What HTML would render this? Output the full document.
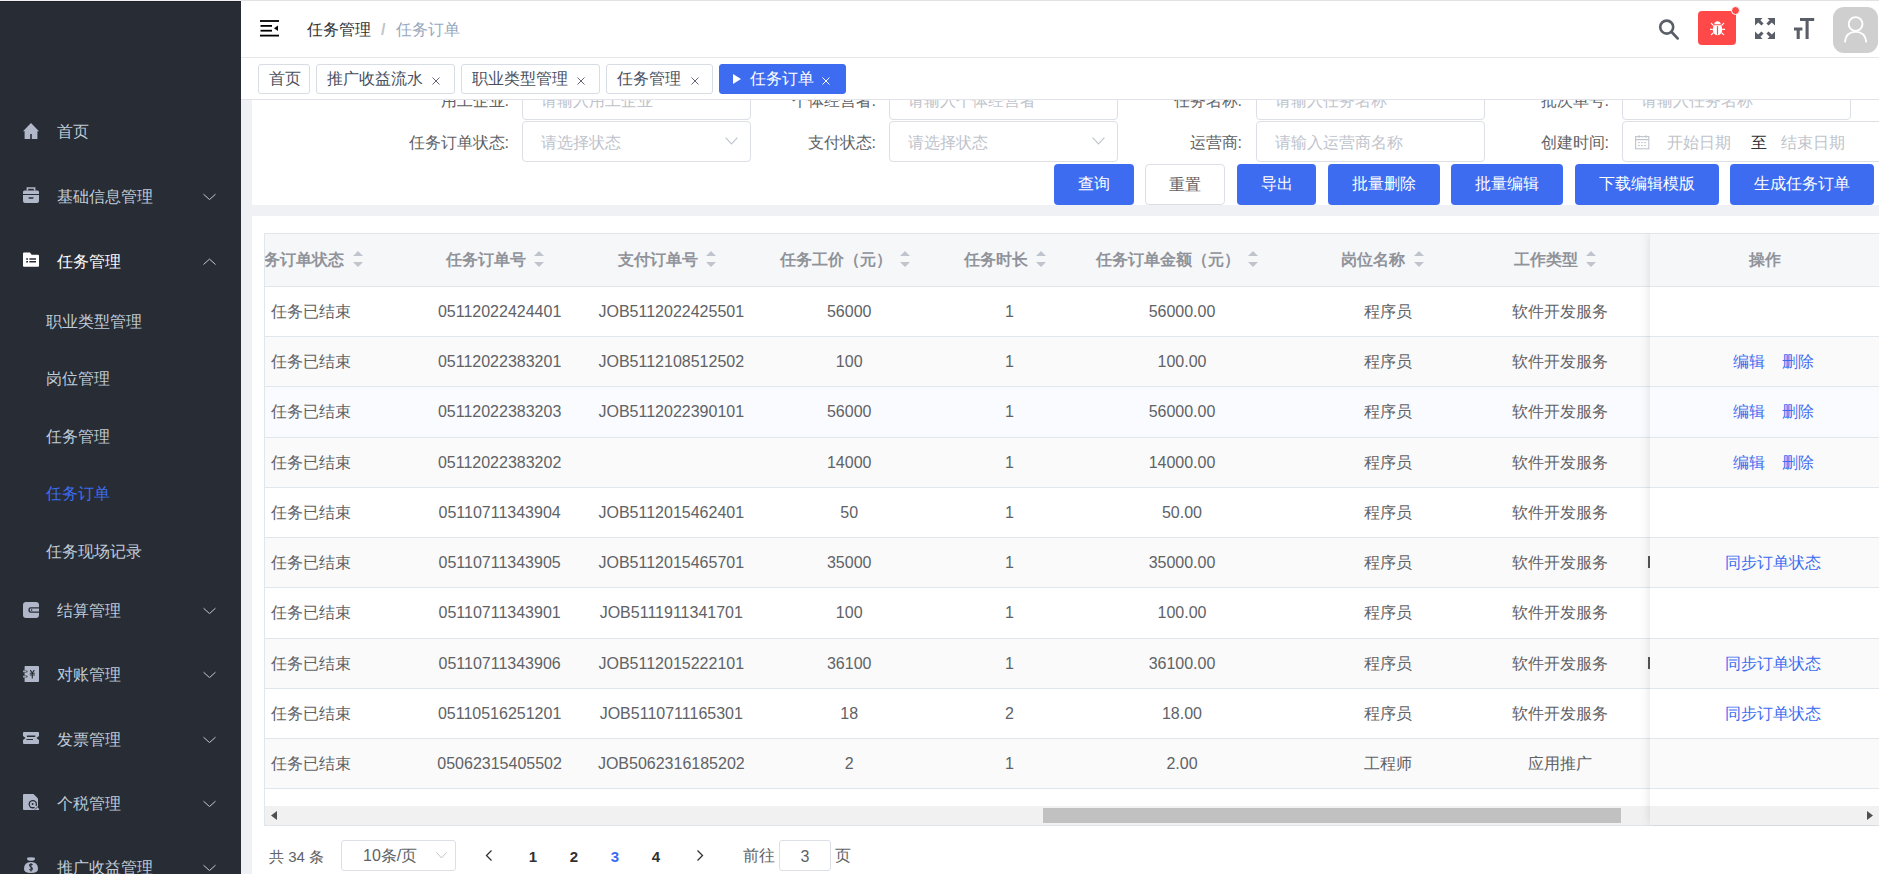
<!DOCTYPE html>
<html><head><meta charset="utf-8">
<style>
*{box-sizing:border-box;margin:0;padding:0}
html,body{width:1879px;height:874px;overflow:hidden;background:#fff;font-family:"Liberation Sans",sans-serif;font-size:16px;color:#606266}
.a{position:absolute}
#topline{left:241px;top:0;width:1638px;height:1px;background:#e2e2e2}
#side{left:0;top:0;width:241px;height:874px;background:#282c34;overflow:hidden}
#sl0{left:0;top:0;width:241px;height:1px;background:#f2f2f4;z-index:9}
#sl1{left:0;top:1px;width:241px;height:1px;background:#1f2228;z-index:9}
.mi{position:absolute;left:0;width:241px;height:30px;line-height:30px;color:#bfcbd9;font-size:16px;white-space:nowrap}
.mi .ic{position:absolute;left:23px;top:7px;width:16px;height:16px}
.mi .tx{position:absolute;left:57px;top:1px}
.mi .ar{position:absolute;left:203px;top:12px;width:13px;height:7px}
.si{position:absolute;left:46px;height:30px;line-height:32px;color:#bfcbd9;font-size:16px;white-space:nowrap}
#nav{left:241px;top:1px;width:1638px;height:57px;background:#fff;border-bottom:1px solid #e6e6e6;z-index:5}
#tags{left:241px;top:58px;width:1638px;height:42px;background:#fff;border-bottom:1px solid #e1e3e8;z-index:5}
.tag{position:absolute;top:6px;height:30px;border:1px solid #d8dce5;border-radius:3px;background:#fff;color:#495060;font-size:16px;line-height:28px;white-space:nowrap;padding-left:10px}
.tag .x{position:absolute;font-size:13px;top:0}
#main{left:241px;top:58px;width:1638px;height:816px;background:#eff1f5}
.card{position:absolute;left:11px;background:#fff}
.lbl{position:absolute;height:41px;line-height:43px;color:#606266;font-size:16px;text-align:right;white-space:nowrap}
.inp{position:absolute;height:41px;border:1px solid #dcdfe6;border-radius:4px;background:#fff;color:#c0c4cc;font-size:16px;line-height:41px;padding-left:18px;white-space:nowrap;overflow:hidden}
.btn{position:absolute;top:164px;height:41px;border-radius:4px;background:#3d6cf0;color:#fff;font-size:16px;line-height:40px;text-align:center;white-space:nowrap;font-weight:500}
.btn.pl{background:#fff;border:1px solid #dcdfe6;color:#606266;line-height:39px}
.th{position:absolute;top:0;height:53px;line-height:53px;font-size:16px;font-weight:bold;color:#909399;white-space:nowrap}
.tr{position:absolute;left:0;width:1615px;border-bottom:1px solid #dfe6ec}
.td{position:absolute;top:0;width:300px;height:49px;line-height:49px;text-align:center;white-space:nowrap;color:#606266;font-size:16px}
.td.lk{width:auto;text-align:left;color:#3d6cf0}
.pg{font-size:16px;color:#606266;white-space:nowrap}
.pn{top:841px;width:40px;height:31px;line-height:31px;text-align:center;font-size:15px;font-weight:bold;color:#303133}
</style></head><body>
<div id="topline" class="a"></div><div id="sl0" class="a"></div><div id="sl1" class="a"></div>
<div id="side" class="a"><div class="mi" style="top:116px"><svg class="ic" viewBox="0 0 16 16"><path d="M8 0L0 8.2H1.6V16H7.2V11H8.8V16H14.4V8.2H16Z" fill="#b1b8c9"/></svg><span class="tx">首页</span></div><div class="mi" style="top:181px"><svg class="ic" style="top:6px" viewBox="0 0 16 16"><path d="M3.6 0.2H12.4V3.4H10.8V1.8H5.2V3.4H3.6Z" fill="#b1b8c9"/><path d="M1.5 3.4H14.5Q16 3.4 16 4.9V7H0V4.9Q0 3.4 1.5 3.4Z" fill="#b1b8c9"/><path d="M0 8H16V14Q16 16 14 16H2Q0 16 0 14ZM5.5 10.2V11Q5.5 11.8 6.3 11.8H9.7Q10.5 11.8 10.5 11V10.2Z" fill="#b1b8c9" fill-rule="evenodd"/></svg><span class="tx">基础信息管理</span><svg class="ar" viewBox="0 0 13 7"><path d="M0.5 1.2L6.5 6.6L12.5 1.2" fill="none" stroke="#bfcbd9" stroke-width="1"/></svg></div><div class="mi" style="top:246px;color:#fff"><svg class="ic" style="top:6px" viewBox="0 0 16 16"><path d="M1 0.5H7L8.6 2.7H15Q16 2.7 16 3.7V14Q16 14.8 15 14.8H1Q0 14.8 0 14V1.5Q0 0.5 1 0.5ZM3.2 6.2V7.8H5V6.2ZM6.4 6.2V7.8H13V6.2ZM3.2 9V10.6H5V9ZM6.4 9V10.6H13V9Z" fill="#fff" fill-rule="evenodd"/></svg><span class="tx">任务管理</span><svg class="ar" viewBox="0 0 13 7"><path d="M0.5 6.5L6.5 1.1L12.5 6.5" fill="none" stroke="#bfcbd9" stroke-width="1"/></svg></div><div class="si" style="top:306px">职业类型管理</div><div class="si" style="top:363px">岗位管理</div><div class="si" style="top:421px">任务管理</div><div class="si" style="top:478px;color:#3d6cf0">任务订单</div><div class="si" style="top:536px">任务现场记录</div><div class="mi" style="top:595px"><svg class="ic" viewBox="0 0 16 16"><path d="M3 0H13Q16 0 16 3V5.2H7.6Q5.4 5.2 5.4 8Q5.4 10.8 7.6 10.8H16V13Q16 16 13 16H3Q0 16 0 13V3Q0 0 3 0ZM16 6.6V9.4H7.6Q6.8 9.4 6.8 8Q6.8 6.6 7.6 6.6ZM8 7.3V8.7H9.2V7.3Z" fill="#b1b8c9" fill-rule="evenodd"/></svg><span class="tx">结算管理</span><svg class="ar" viewBox="0 0 13 7"><path d="M0.5 1.2L6.5 6.6L12.5 1.2" fill="none" stroke="#bfcbd9" stroke-width="1"/></svg></div><div class="mi" style="top:659px"><svg class="ic" viewBox="0 0 16 16"><path d="M2.2 0H15Q16 0 16 1V15Q16 16 15 16H2.2Q1.6 16 1.6 15.4V11.6H3Q4.6 11.6 4.6 10.6Q4.6 9.6 3 9.6H1.6V6.4H3Q4.6 6.4 4.6 5.4Q4.6 4.4 3 4.4H1.6V0.6Q1.6 0 2.2 0Z" fill="#b1b8c9"/><path d="M0 4.6H2.6Q3.6 4.6 3.6 5.4Q3.6 6.2 2.6 6.2H0ZM0 9.8H2.6Q3.6 9.8 3.6 10.6Q3.6 11.4 2.6 11.4H0Z" fill="#b1b8c9" opacity=".85"/><path d="M7.2 4.2L9.3 6.8L11.4 4.2M6.8 7.2H11.8M6.8 9H11.8M9.3 6.8V12.4" fill="none" stroke="#282c34" stroke-width="1.1"/></svg><span class="tx">对账管理</span><svg class="ar" viewBox="0 0 13 7"><path d="M0.5 1.2L6.5 6.6L12.5 1.2" fill="none" stroke="#bfcbd9" stroke-width="1"/></svg></div><div class="mi" style="top:724px"><svg class="ic" viewBox="0 0 16 16"><path d="M1 1H15Q16 1 16 2V5L13.4 7L16 9V12Q16 13 15 13H1Q0 13 0 12V9L2.6 7L0 5V2Q0 1 1 1ZM3.9 4.6V5.9H12.3V4.6ZM3.5 8V9.1H10V8Z" fill="#b1b8c9" fill-rule="evenodd"/></svg><span class="tx">发票管理</span><svg class="ar" viewBox="0 0 13 7"><path d="M0.5 1.2L6.5 6.6L12.5 1.2" fill="none" stroke="#bfcbd9" stroke-width="1"/></svg></div><div class="mi" style="top:788px"><svg class="ic" style="top:6px" viewBox="0 0 16 16"><path d="M1 0H10.5L15 4.5V16H1Q0 16 0 15V1Q0 0 1 0Z" fill="#b1b8c9"/><circle cx="9.8" cy="10.2" r="4.2" fill="#282c34"/><circle cx="9.8" cy="10.2" r="2.9" fill="#b1b8c9"/><circle cx="9.6" cy="10" r="1" fill="#282c34"/><path d="M12.4 12.8L15.2 15.6" stroke="#b1b8c9" stroke-width="2.2" stroke-linecap="round"/><path d="M12 15.5L15.5 12" stroke="#282c34" stroke-width="0.8"/></svg><span class="tx">个税管理</span><svg class="ar" viewBox="0 0 13 7"><path d="M0.5 1.2L6.5 6.6L12.5 1.2" fill="none" stroke="#bfcbd9" stroke-width="1"/></svg></div><div class="mi" style="top:852px"><svg class="ic" style="top:5px" viewBox="0 0 16 16"><path d="M4 1.5Q4 0 6 0.6Q8 -0.2 10 0.6Q12 0 12 1.5Q12 3.8 8 3.8Q4 3.8 4 1.5Z" fill="#b1b8c9"/><path d="M8 5Q15 5 15 12Q15 16 8 16Q1 16 1 12Q1 5 8 5Z" fill="#b1b8c9"/><path d="M9.6 7.8Q8 6.4 6.8 7.6Q6 8.8 8 10Q10 11.2 9.2 12.6Q8 13.8 6.4 12.4M8 6.2V14.4" fill="none" stroke="#282c34" stroke-width="1.1"/></svg><span class="tx">推广收益管理</span><svg class="ar" viewBox="0 0 13 7"><path d="M0.5 1.2L6.5 6.6L12.5 1.2" fill="none" stroke="#bfcbd9" stroke-width="1"/></svg></div></div>
<div id="main" class="a"></div>
<div class="a" style="left:252px;top:58px;width:1627px;height:147px;background:#fff"></div>
<div class="lbl" style="left:300px;top:79px;width:209px">用工企业:</div>
<div class="inp" style="left:522px;top:79px;width:229px">请输入用工企业</div>
<div class="lbl" style="left:700px;top:79px;width:176px">个体经营者:</div>
<div class="inp" style="left:889px;top:79px;width:229px">请输入个体经营者</div>
<div class="lbl" style="left:1100px;top:79px;width:142px">任务名称:</div>
<div class="inp" style="left:1256px;top:79px;width:229px">请输入任务名称</div>
<div class="lbl" style="left:1450px;top:79px;width:159px">批次单号:</div>
<div class="inp" style="left:1622px;top:79px;width:229px">请输入任务名称</div>
<div class="lbl" style="left:300px;top:121px;width:209px">任务订单状态:</div>
<div class="inp" style="left:522px;top:121px;width:229px">请选择状态<svg class="a" style="left:202px;top:15px" width="13" height="8" viewBox="0 0 13 8"><path d="M0.6 0.6L6.5 6.8L12.4 0.6" fill="none" stroke="#c0c4cc" stroke-width="1.2"/></svg></div>
<div class="lbl" style="left:700px;top:121px;width:176px">支付状态:</div>
<div class="inp" style="left:889px;top:121px;width:229px">请选择状态<svg class="a" style="left:202px;top:15px" width="13" height="8" viewBox="0 0 13 8"><path d="M0.6 0.6L6.5 6.8L12.4 0.6" fill="none" stroke="#c0c4cc" stroke-width="1.2"/></svg></div>
<div class="lbl" style="left:1100px;top:121px;width:142px">运营商:</div>
<div class="inp" style="left:1256px;top:121px;width:229px">请输入运营商名称</div>
<div class="lbl" style="left:1450px;top:121px;width:159px">创建时间:</div>
<div class="inp" style="left:1622px;top:121px;width:400px;padding-left:0">
<svg class="a" style="left:12px;top:13px" width="15" height="15" viewBox="0 0 15 15"><rect x="0.6" y="1.6" width="13.2" height="12.2" fill="none" stroke="#c0c4cc" stroke-width="1.1"/><path d="M0.6 4.6H13.8M4 0.2V2.8M11 0.2V2.8" stroke="#c0c4cc" stroke-width="1.1"/><path d="M3 7.6H11M3 10.6H11" stroke="#c0c4cc" stroke-width="0.9" stroke-dasharray="2 1"/></svg>
<span class="a" style="left:44px;top:0">开始日期</span><span class="a" style="left:128px;top:0;color:#303133">至</span><span class="a" style="left:158px;top:0">结束日期</span></div>
<div class="btn" style="left:1054px;width:80px">查询</div>
<div class="btn pl" style="left:1145px;width:80px">重置</div>
<div class="btn" style="left:1237px;width:79px">导出</div>
<div class="btn" style="left:1328px;width:112px">批量删除</div>
<div class="btn" style="left:1451px;width:112px">批量编辑</div>
<div class="btn" style="left:1575px;width:144px">下载编辑模版</div>
<div class="btn" style="left:1730px;width:144px">生成任务订单</div>
<div class="a" style="left:252px;top:216px;width:1627px;height:658px;background:#fff"></div>
<div class="a" style="left:264px;top:233px;width:1615px;height:593px;overflow:hidden">
<div class="a" style="left:0;top:0;width:1615px;height:54px;background:#f6f7f9;border-top:1px solid #dfe6ec;border-bottom:1px solid #dfe6ec"></div>
<div class="th" style="left:-16px">任务订单状态</div><svg class="a" style="left:89px;top:18px" width="10" height="16" viewBox="0 0 10 16"><path d="M0 5L5 0L10 5Z M0 11L5 16L10 11Z" fill="#c0c4cc"/></svg>
<div class="th" style="left:182px">任务订单号</div><svg class="a" style="left:270px;top:18px" width="10" height="16" viewBox="0 0 10 16"><path d="M0 5L5 0L10 5Z M0 11L5 16L10 11Z" fill="#c0c4cc"/></svg>
<div class="th" style="left:354px">支付订单号</div><svg class="a" style="left:442px;top:18px" width="10" height="16" viewBox="0 0 10 16"><path d="M0 5L5 0L10 5Z M0 11L5 16L10 11Z" fill="#c0c4cc"/></svg>
<div class="th" style="left:516px">任务工价（元）</div><svg class="a" style="left:636px;top:18px" width="10" height="16" viewBox="0 0 10 16"><path d="M0 5L5 0L10 5Z M0 11L5 16L10 11Z" fill="#c0c4cc"/></svg>
<div class="th" style="left:700px">任务时长</div><svg class="a" style="left:772px;top:18px" width="10" height="16" viewBox="0 0 10 16"><path d="M0 5L5 0L10 5Z M0 11L5 16L10 11Z" fill="#c0c4cc"/></svg>
<div class="th" style="left:832px">任务订单金额（元）</div><svg class="a" style="left:984px;top:18px" width="10" height="16" viewBox="0 0 10 16"><path d="M0 5L5 0L10 5Z M0 11L5 16L10 11Z" fill="#c0c4cc"/></svg>
<div class="th" style="left:1077px">岗位名称</div><svg class="a" style="left:1150px;top:18px" width="10" height="16" viewBox="0 0 10 16"><path d="M0 5L5 0L10 5Z M0 11L5 16L10 11Z" fill="#c0c4cc"/></svg>
<div class="th" style="left:1250px">工作类型</div><svg class="a" style="left:1322px;top:18px" width="10" height="16" viewBox="0 0 10 16"><path d="M0 5L5 0L10 5Z M0 11L5 16L10 11Z" fill="#c0c4cc"/></svg>
<div class="tr" style="top:54px;height:50px;background:#fff"><div class="td" style="left:-103px">任务已结束</div><div class="td" style="left:85.60000000000002px">05112022424401</div><div class="td" style="left:257.29999999999995px">JOB5112022425501</div><div class="td" style="left:435.20000000000005px">56000</div><div class="td" style="left:595.4px">1</div><div class="td" style="left:768px">56000.00</div><div class="td" style="left:973.7px">程序员</div><div class="td" style="left:1146px">软件开发服务</div></div>
<div class="tr" style="top:104px;height:50px;background:#fafafa"><div class="td" style="left:-103px">任务已结束</div><div class="td" style="left:85.60000000000002px">05112022383201</div><div class="td" style="left:257.29999999999995px">JOB5112108512502</div><div class="td" style="left:435.20000000000005px">100</div><div class="td" style="left:595.4px">1</div><div class="td" style="left:768px">100.00</div><div class="td" style="left:973.7px">程序员</div><div class="td" style="left:1146px">软件开发服务</div></div>
<div class="tr" style="top:154px;height:51px;background:#fafbfe"><div class="td" style="left:-103px">任务已结束</div><div class="td" style="left:85.60000000000002px">05112022383203</div><div class="td" style="left:257.29999999999995px">JOB5112022390101</div><div class="td" style="left:435.20000000000005px">56000</div><div class="td" style="left:595.4px">1</div><div class="td" style="left:768px">56000.00</div><div class="td" style="left:973.7px">程序员</div><div class="td" style="left:1146px">软件开发服务</div></div>
<div class="tr" style="top:205px;height:50px;background:#fafafa"><div class="td" style="left:-103px">任务已结束</div><div class="td" style="left:85.60000000000002px">05112022383202</div><div class="td" style="left:435.20000000000005px">14000</div><div class="td" style="left:595.4px">1</div><div class="td" style="left:768px">14000.00</div><div class="td" style="left:973.7px">程序员</div><div class="td" style="left:1146px">软件开发服务</div></div>
<div class="tr" style="top:255px;height:50px;background:#fff"><div class="td" style="left:-103px">任务已结束</div><div class="td" style="left:85.60000000000002px">05110711343904</div><div class="td" style="left:257.29999999999995px">JOB5112015462401</div><div class="td" style="left:435.20000000000005px">50</div><div class="td" style="left:595.4px">1</div><div class="td" style="left:768px">50.00</div><div class="td" style="left:973.7px">程序员</div><div class="td" style="left:1146px">软件开发服务</div></div>
<div class="tr" style="top:305px;height:50px;background:#fafafa"><div class="td" style="left:-103px">任务已结束</div><div class="td" style="left:85.60000000000002px">05110711343905</div><div class="td" style="left:257.29999999999995px">JOB5112015465701</div><div class="td" style="left:435.20000000000005px">35000</div><div class="td" style="left:595.4px">1</div><div class="td" style="left:768px">35000.00</div><div class="td" style="left:973.7px">程序员</div><div class="td" style="left:1146px">软件开发服务</div></div>
<div class="tr" style="top:355px;height:51px;background:#fff"><div class="td" style="left:-103px">任务已结束</div><div class="td" style="left:85.60000000000002px">05110711343901</div><div class="td" style="left:257.29999999999995px">JOB5111911341701</div><div class="td" style="left:435.20000000000005px">100</div><div class="td" style="left:595.4px">1</div><div class="td" style="left:768px">100.00</div><div class="td" style="left:973.7px">程序员</div><div class="td" style="left:1146px">软件开发服务</div></div>
<div class="tr" style="top:406px;height:50px;background:#fafafa"><div class="td" style="left:-103px">任务已结束</div><div class="td" style="left:85.60000000000002px">05110711343906</div><div class="td" style="left:257.29999999999995px">JOB5112015222101</div><div class="td" style="left:435.20000000000005px">36100</div><div class="td" style="left:595.4px">1</div><div class="td" style="left:768px">36100.00</div><div class="td" style="left:973.7px">程序员</div><div class="td" style="left:1146px">软件开发服务</div></div>
<div class="tr" style="top:456px;height:50px;background:#fff"><div class="td" style="left:-103px">任务已结束</div><div class="td" style="left:85.60000000000002px">05110516251201</div><div class="td" style="left:257.29999999999995px">JOB5110711165301</div><div class="td" style="left:435.20000000000005px">18</div><div class="td" style="left:595.4px">2</div><div class="td" style="left:768px">18.00</div><div class="td" style="left:973.7px">程序员</div><div class="td" style="left:1146px">软件开发服务</div></div>
<div class="tr" style="top:506px;height:50px;background:#fafafa"><div class="td" style="left:-103px">任务已结束</div><div class="td" style="left:85.60000000000002px">05062315405502</div><div class="td" style="left:257.29999999999995px">JOB5062316185202</div><div class="td" style="left:435.20000000000005px">2</div><div class="td" style="left:595.4px">1</div><div class="td" style="left:768px">2.00</div><div class="td" style="left:973.7px">工程师</div><div class="td" style="left:1146px">应用推广</div></div>
<div class="a" style="left:0;top:573px;width:1615px;height:19px;background:#f1f1f1"></div>
<div class="a" style="left:0;top:592px;width:1615px;height:1px;background:#dfe6ec"></div>
<div class="a" style="left:779px;top:575px;width:578px;height:15px;background:#c1c1c1"></div>
<svg class="a" style="left:7px;top:578px" width="6" height="9" viewBox="0 0 6 9"><path d="M6 0V9L0 4.5Z" fill="#505050"/></svg>
<div class="a" style="left:1386px;top:0;width:229px;height:592px;box-shadow:0 0 10px rgba(0,0,0,.12);background:#fff">
<div class="a" style="left:0;top:0;width:300px;height:54px;background:#f6f7f9;border-top:1px solid #dfe6ec;border-bottom:1px solid #dfe6ec"></div>
<div class="th" style="left:98.5px">操作</div>
<div class="tr" style="top:54px;height:50px;background:#fff"></div>
<div class="tr" style="top:104px;height:50px;background:#fafafa"><div class="td lk" style="left:82.70000000000005px">编辑</div><div class="td lk" style="left:131.70000000000005px">删除</div></div>
<div class="tr" style="top:154px;height:51px;background:#fafbfe"><div class="td lk" style="left:82.70000000000005px">编辑</div><div class="td lk" style="left:131.70000000000005px">删除</div></div>
<div class="tr" style="top:205px;height:50px;background:#fafafa"><div class="td lk" style="left:82.70000000000005px">编辑</div><div class="td lk" style="left:131.70000000000005px">删除</div></div>
<div class="tr" style="top:255px;height:50px;background:#fff"></div>
<div class="tr" style="top:305px;height:50px;background:#fafafa"><div class="td lk" style="left:75px">同步订单状态</div></div>
<div class="tr" style="top:355px;height:51px;background:#fff"></div>
<div class="tr" style="top:406px;height:50px;background:#fafafa"><div class="td lk" style="left:75px">同步订单状态</div></div>
<div class="tr" style="top:456px;height:50px;background:#fff"><div class="td lk" style="left:75px">同步订单状态</div></div>
<div class="tr" style="top:506px;height:50px;background:#fafafa"></div>
<div class="a" style="left:0;top:573px;width:300px;height:19px;background:#f1f1f1"></div>
</div>
<div class="a" style="left:1384px;top:323px;width:2px;height:12px;background:#505050"></div>
<div class="a" style="left:1384px;top:424px;width:2px;height:12px;background:#505050"></div>
</div>

<div id="nav" class="a">
<svg class="a" style="left:19px;top:19px" width="20" height="18" viewBox="0 0 20 18"><path d="M0 1H19" stroke="#000" stroke-width="1.8"/><path d="M0.5 5.9H12" stroke="#000" stroke-width="1.8"/><path d="M0.5 10.7H12" stroke="#000" stroke-width="1.8"/><path d="M0 15.6H19" stroke="#000" stroke-width="1.8"/><path d="M18 5.5V11.1L14 8.3Z" fill="#000"/></svg>
<div class="a" style="left:66px;top:14px;height:30px;line-height:30px;font-size:16px;color:#303133;white-space:nowrap">任务管理</div>
<div class="a" style="left:140px;top:14px;height:30px;line-height:30px;font-size:16px;color:#c0c4cc;white-space:nowrap;font-weight:bold">/</div>
<div class="a" style="left:155px;top:14px;height:30px;line-height:30px;font-size:16px;color:#97a8be;white-space:nowrap">任务订单</div>
<svg class="a" style="left:1416px;top:17px" width="22" height="24" viewBox="0 0 22 24"><circle cx="9.7" cy="9.1" r="6.5" fill="none" stroke="#5a5e66" stroke-width="2.6"/><path d="M14.6 14L20.6 20.4" stroke="#5a5e66" stroke-width="2.7" stroke-linecap="round"/></svg>
<div class="a" style="left:1457px;top:10px;width:38px;height:34px;background:#ff4949;border-radius:4px"></div>
<svg class="a" style="left:1469px;top:20px" width="15" height="15" viewBox="0 0 15 15"><path d="M4.2 3.2Q4.6 0.2 7.5 0.2Q10.4 0.2 10.8 3.2Z" fill="#fff"/><path d="M3.8 4.2H11.2Q12.2 6 12.2 9Q12.2 13.6 7.5 14.2Q2.8 13.6 2.8 9Q2.8 6 3.8 4.2Z" fill="#fff"/><path d="M7.5 5.2V13.6" stroke="#ff4949" stroke-width="1.2"/><path d="M1 2L3.6 4.6M14 2L11.4 4.6M0 8.4H2.8M15 8.4H12.2M1 14L3.6 11.6M14 14L11.4 11.6" stroke="#fff" stroke-width="1.1"/></svg>
<div class="a" style="left:1490.1px;top:5.2px;width:9px;height:9px;background:#ff4949;border:1px solid #fff;border-radius:50%"></div>
<svg class="a" style="left:1514px;top:17px" width="20" height="21" viewBox="0 0 20 21"><path d="M0 0H7.6L5.4 2.2L8.6 5.4L6.4 7.6L3.2 4.4L0 7.6Z M20 0H12.4L14.6 2.2L11.4 5.4L13.6 7.6L16.8 4.4L20 7.6Z M0 21H7.6L5.4 18.8L8.6 15.6L6.4 13.4L3.2 16.6L0 13.4Z M20 21H12.4L14.6 18.8L11.4 15.6L13.6 13.4L16.8 16.6L20 13.4Z" fill="#5a5e66"/></svg>
<svg class="a" style="left:1553px;top:17px" width="21" height="22" viewBox="0 0 21 22"><path d="M6 1.5H20.2M13.1 1.5V21" stroke="#5a5e66" stroke-width="3.1"/><path d="M0 11H8.4M4.2 11V21" stroke="#5a5e66" stroke-width="3.1"/></svg>
<div class="a" style="left:1592px;top:6px;width:45px;height:46px;background:#cfcfcf;border-radius:11px"></div>
<svg class="a" style="left:1592px;top:6px" width="46" height="46" viewBox="0 0 46 46"><circle cx="22.6" cy="17" r="6.9" fill="none" stroke="#fff" stroke-width="1.9"/><path d="M12 34.6Q12.8 25.2 22.6 24.6Q32.3 25.2 33.2 34.6" fill="none" stroke="#fff" stroke-width="1.9" stroke-linecap="round"/></svg>
</div>
<div id="tags" class="a">
<div class="tag" style="left:17px;width:52px">首页</div>
<div class="tag" style="left:75px;width:139px">推广收益流水<svg class="a" style="left:115.3px;top:11.5px" width="8" height="8" viewBox="0 0 8 8"><path d="M0.5 0.5L7.5 7.5M7.5 0.5L0.5 7.5" stroke="#5a6070" stroke-width="0.95"/></svg></div>
<div class="tag" style="left:220px;width:139px">职业类型管理<svg class="a" style="left:115px;top:11.5px" width="8" height="8" viewBox="0 0 8 8"><path d="M0.5 0.5L7.5 7.5M7.5 0.5L0.5 7.5" stroke="#5a6070" stroke-width="0.95"/></svg></div>
<div class="tag" style="left:365px;width:107px">任务管理<svg class="a" style="left:83.6px;top:11.5px" width="8" height="8" viewBox="0 0 8 8"><path d="M0.5 0.5L7.5 7.5M7.5 0.5L0.5 7.5" stroke="#5a6070" stroke-width="0.95"/></svg></div>
<div class="tag" style="left:478px;width:127px;background:#3d6cf0;border-color:#3d6cf0;color:#fff;padding-left:30px"><svg class="a" style="left:13px;top:9px" width="8" height="10" viewBox="0 0 8 10"><path d="M0 0L8 5L0 10Z" fill="#fff"/></svg>任务订单<svg class="a" style="left:102.2px;top:11.5px" width="8" height="8" viewBox="0 0 8 8"><path d="M0.5 0.5L7.5 7.5M7.5 0.5L0.5 7.5" stroke="#fff" stroke-width="1"/></svg></div>
</div>

<svg class="a" style="left:1866.5px;top:811px" width="6" height="9" viewBox="0 0 6 9"><path d="M0 0V9L6 4.5Z" fill="#505050"/></svg>
<div class="a" style="left:264px;top:233px;width:1px;height:593px;background:#dfe6ec"></div>
<div class="a pg" style="left:269px;top:841px;height:31px;line-height:31px;font-size:15px">共 34 条</div>
<div class="a" style="left:341px;top:840px;width:115px;height:31px;border:1px solid #dcdfe6;border-radius:3px"></div>
<div class="a pg" style="left:363px;top:840px;height:31px;line-height:31px;color:#606266">10条/页</div>
<svg class="a" style="left:436px;top:852px" width="11" height="7" viewBox="0 0 11 7"><path d="M0.5 0.5L5.5 6L10.5 0.5" fill="none" stroke="#c0c4cc" stroke-width="1"/></svg>
<svg class="a" style="left:485px;top:849.5px" width="8" height="11" viewBox="0 0 8 11"><path d="M6.5 0.5L1.5 5.5L6.5 10.5" fill="none" stroke="#303133" stroke-width="1.3"/></svg>
<div class="a pn" style="left:513px">1</div>
<div class="a pn" style="left:554px">2</div>
<div class="a pn" style="left:595px;color:#3d6cf0">3</div>
<div class="a pn" style="left:636px">4</div>
<svg class="a" style="left:695.5px;top:849.5px" width="8" height="11" viewBox="0 0 8 11"><path d="M1.5 0.5L6.5 5.5L1.5 10.5" fill="none" stroke="#303133" stroke-width="1.3"/></svg>
<div class="a pg" style="left:743px;top:840px;height:31px;line-height:31px">前往</div>
<div class="a" style="left:779px;top:840px;width:52px;height:31px;border:1px solid #dcdfe6;border-radius:3px;text-align:center;line-height:31px;color:#606266;font-size:16px">3</div>
<div class="a pg" style="left:835px;top:840px;height:31px;line-height:31px">页</div>
</body></html>
